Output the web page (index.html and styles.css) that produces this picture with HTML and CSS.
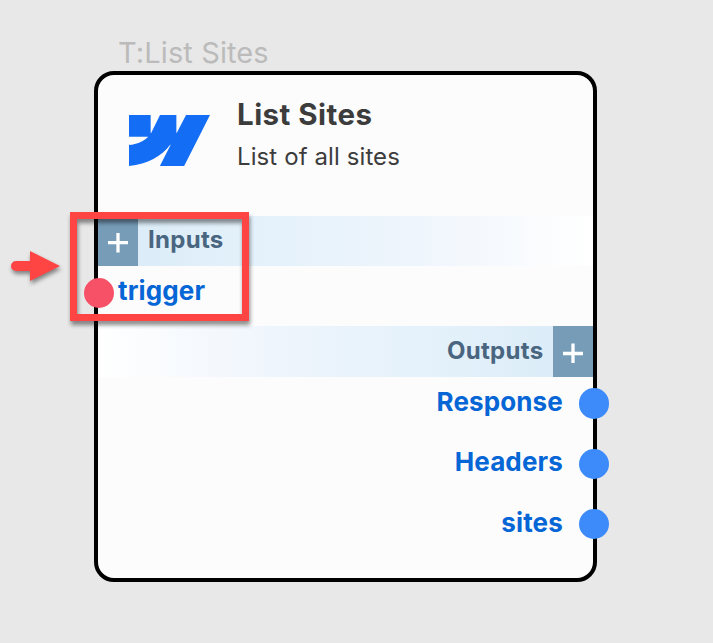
FILE: index.html
```html
<!DOCTYPE html>
<html lang="en">
<head>
<meta charset="utf-8">
<title>List Sites</title>
<link rel="stylesheet" href="styles.css">
</head>
<body>
<main class="canvas">
  <section class="node">
    <div class="node-label"><span>T:List Sites</span></div>
    <article class="card">
      <header class="card-header">
        <svg class="logo" viewBox="0 4.515 24 14.97" preserveAspectRatio="none"><path d="m24 4.515-7.658 14.97H9.149l3.205-6.204h-.144C9.566 16.713 5.621 18.973 0 19.485v-6.118s3.596-.213 5.71-2.435H0V4.515h6.417v5.278l.144-.001 2.622-5.277h4.854v5.244h.144l2.72-5.244H24Z"/></svg>
        <div class="heading">
          <h1><span>List Sites</span></h1>
          <p><span>List of all sites</span></p>
        </div>
      </header>
      <div class="bar inputs">
        <button class="add" aria-label="Add input"><svg viewBox="0 0 40 50"><path d="M10 26.7h20M20 17v19.5"/></svg></button>
        <span class="bar-title">Inputs</span>
      </div>
      <div class="port port-in"><i class="dot red"></i><span>trigger</span></div>
      <div class="bar outputs">
        <span class="bar-title">Outputs</span>
        <button class="add" aria-label="Add output"><svg viewBox="0 0 40 50"><path d="M10 27.5h20M20 17.5v19.5"/></svg></button>
      </div>
      <div class="port port-out"><span>Response</span><i class="dot"></i></div>
      <div class="port port-out"><span>Headers</span><i class="dot"></i></div>
      <div class="port port-out"><span>sites</span><i class="dot"></i></div>
    </article>
  </section>
  <div class="highlight"></div>
  <svg class="arrow" viewBox="0 0 60 44"><path d="M11 16H25V6L55 21 25 36V26H11A5 5 0 0 1 11 16Z"/></svg>
</main>
</body>
</html>
```
FILE: styles.css
```css
* { box-sizing: border-box; }
body { margin: 0; background: #e8e8e8; font-family: Inter, "Liberation Sans", sans-serif; }
.canvas { position: relative; width: 713px; height: 643px; overflow: hidden; }
.node { padding: 33px 0 0 94px; }
.node-label { height: 37.6px; padding-left: 24px; font-size: 29px; line-height: 40px; letter-spacing: .1px; color: #bbb; white-space: nowrap; }
.card { width: 503.4px; height: 511px; border: 4px solid #000; border-radius: 20px; background: #fcfcfc; }
.card-header { display: flex; height: 141px; padding: 0 0 0 31px; }
.logo { width: 81px; height: 51px; margin-top: 40px; fill: #146ef5; flex: none; }
.heading { margin-left: 27px; padding-top: 19px; color: #3c3c3c; white-space: nowrap; }
h1 { margin: 0; font-size: 29.5px; line-height: 40px; font-weight: 700; letter-spacing: .45px; }
.heading p { margin: 3px 0 0; font-size: 24px; line-height: 40px; letter-spacing: .1px; }
.bar { display: flex; height: 50px; color: #4a6580; }
.bar-title { font-size: 24px; line-height: 48px; font-weight: 700; letter-spacing: .3px; }
.inputs { background: linear-gradient(90deg, #d9eaf7 0%, #e3f1fa 30%, #edf4fc 60%, #fff 100%); }
.inputs .bar-title { margin-left: 10px; }
.outputs { height: 51px; justify-content: flex-end; background: linear-gradient(270deg, #d9eaf7 0%, #e3f1fa 30%, #edf4fc 60%, #fff 100%); }
.outputs .bar-title { margin-right: 10px; line-height: 50px; }
.add { width: 40px; height: 100%; padding: 0; border: 0; background: #779cb8; flex: none; }
.add svg { display: block; width: 40px; height: 50px; fill: none; stroke: #fff; stroke-width: 3.3; }
.port { display: flex; align-items: center; font-size: 26px; font-weight: 700; letter-spacing: .12px; color: #0666d6; white-space: nowrap; }
.dot { width: 30.5px; height: 30.5px; border-radius: 50%; background: #3d8bfb; flex: none; }
.port span { position: relative; top: -2px; }
.port-in { height: 60px; padding-bottom: 5.5px; }
.port-in .dot { margin: 0 4px 0 -14.5px; }
.red { background: #f65166; }
.port-out { justify-content: flex-end; height: 60.2px; padding-bottom: 6px; }
.port-out .dot { margin: 0 -16px 0 16px; }
.highlight { position: absolute; left: 70px; top: 212px; width: 179px; height: 109px; border: 7px solid #ff4444; filter: drop-shadow(1px 4px 2px rgba(0,0,0,.45)); }
.arrow { position: absolute; left: 5px; top: 245px; width: 60px; height: 44px; fill: #ff4444; filter: drop-shadow(1px 3px 2px rgba(0,0,0,.45)); }
```
